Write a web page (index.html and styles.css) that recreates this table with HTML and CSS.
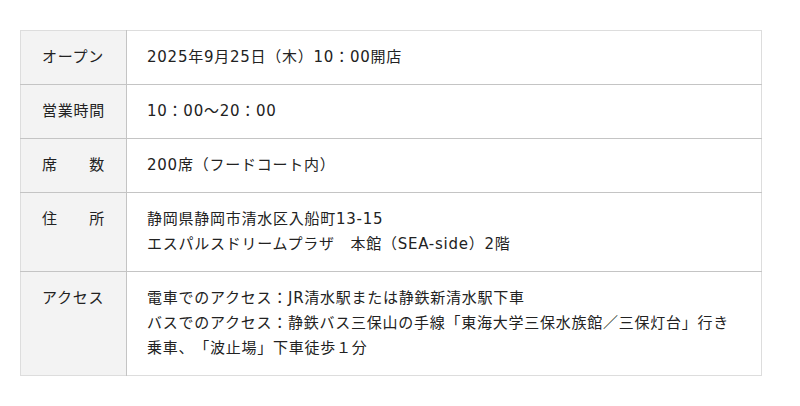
FILE: index.html
```html
<!DOCTYPE html>
<html lang="ja">
<head>
<meta charset="utf-8">
<link rel="stylesheet" href="styles.css">
</head>
<body>
<div class="wrap">
  <table class="info">
    <tr>
      <th>オープン</th>
      <td>2025年9月25日（木）10：00開店</td>
    </tr>
    <tr>
      <th>営業時間</th>
      <td>10：00～20：00</td>
    </tr>
    <tr>
      <th>席　　数</th>
      <td>200席（フードコート内）</td>
    </tr>
    <tr>
      <th>住　　所</th>
      <td>静岡県静岡市清水区入船町13-15<br>エスパルスドリームプラザ　本館（SEA-side）2階</td>
    </tr>
    <tr>
      <th>アクセス</th>
      <td>電車でのアクセス：JR清水駅または静鉄新清水駅下車<br>バスでのアクセス：静鉄バス三保山の手線「東海大学三保水族館／三保灯台」行き<br>乗車、「波止場」下車徒歩１分</td>
    </tr>
  </table>
</div>
</body>
</html>
```

FILE: styles.css
```css
html, body {
  margin: 0;
  padding: 0;
  background: #fff;
}
.wrap {
  padding: 30px 20px;
}
.info {
  width: 742px;
  border-collapse: collapse;
  font-family: "DejaVu Sans", "Noto Sans CJK JP", sans-serif;
  font-size: 15px;
  letter-spacing: 0.05em;
  line-height: 25px;
  color: #222;
  border: 1px solid #ddd;
  text-spacing-trim: space-all;
}
.info tr {
  border-bottom: 1px solid #c4c4c4;
}
.info tr:last-child {
  border-bottom: 1px solid #ddd;
}
.info th {
  width: 62px;
  padding: 14px 21px;
  background: #f3f3f3;
  font-weight: normal;
  text-align: left;
  vertical-align: top;
  white-space: nowrap;
  border-right: 1px solid #c4c4c4;
}
.info td {
  padding: 14px 20px;
  vertical-align: top;
}
```
